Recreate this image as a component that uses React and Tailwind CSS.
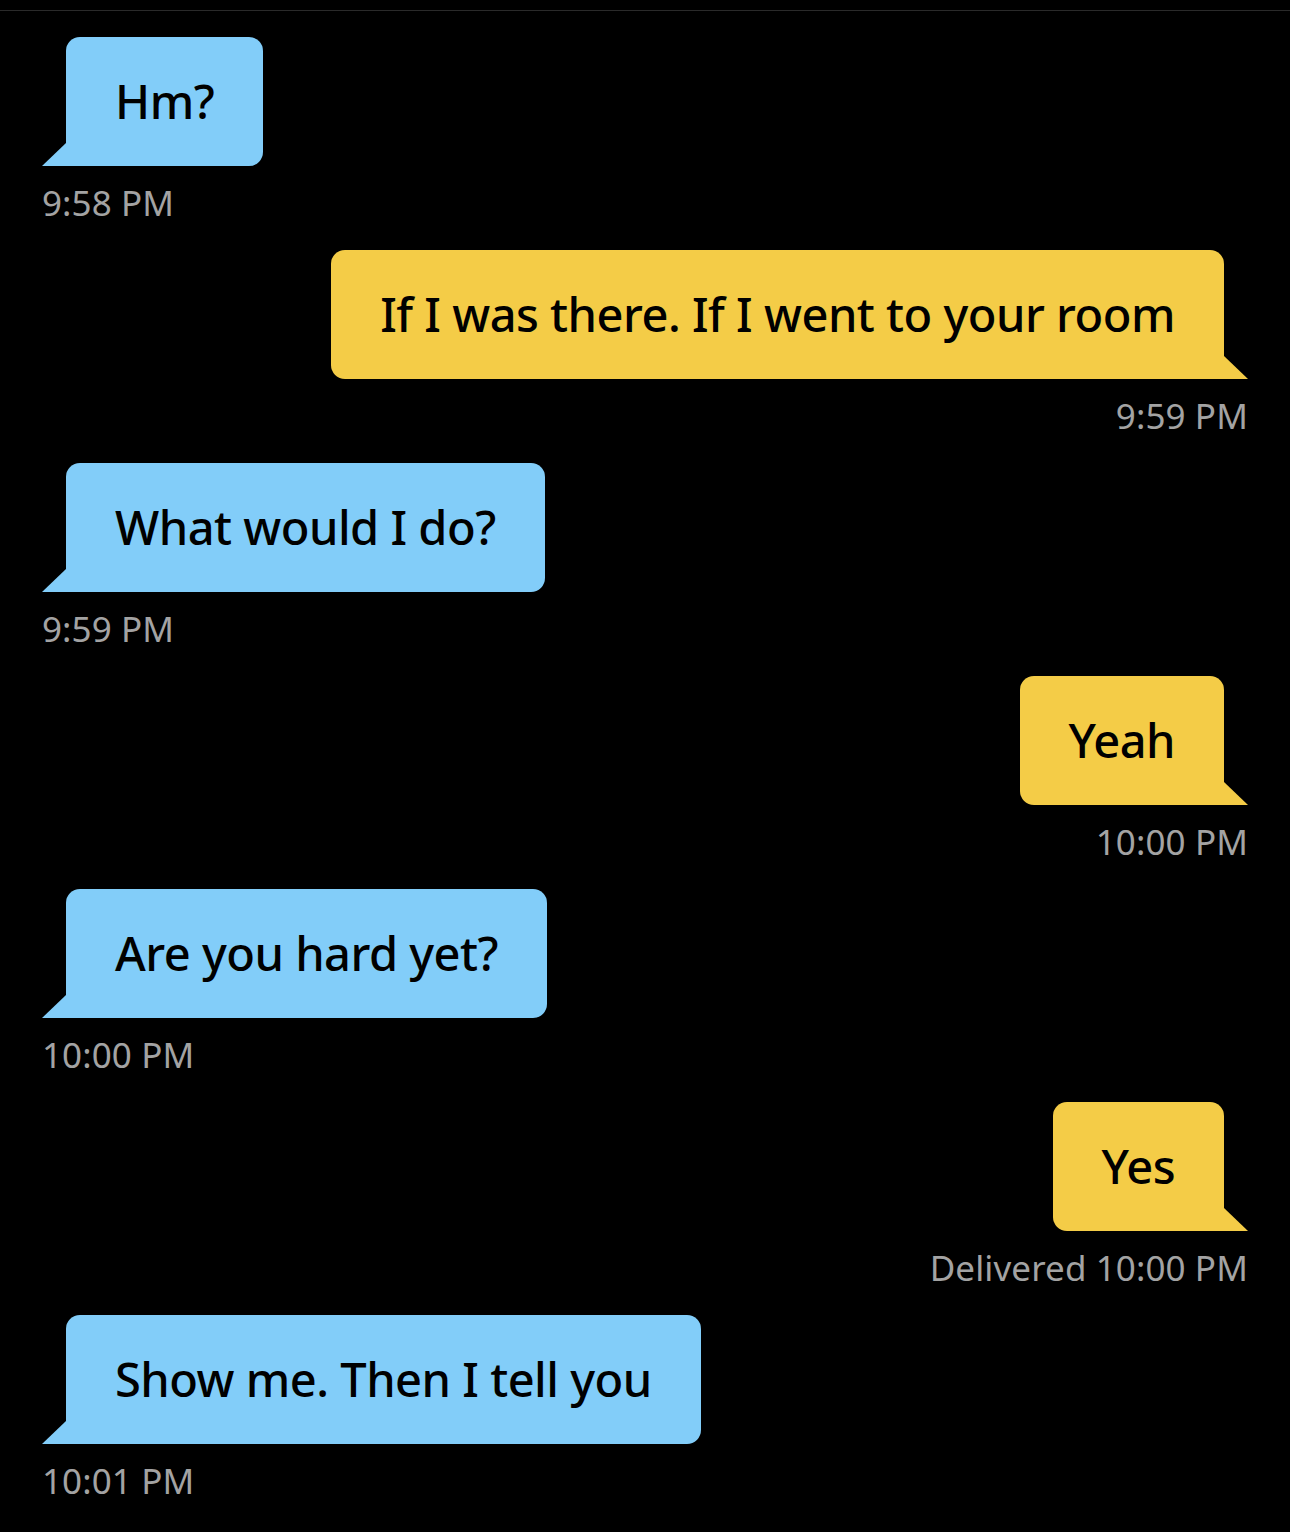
const messages = [
  { from: "them", text: "Hm?", time: "9:58 PM" },
  { from: "me", text: "If I was there. If I went to your room", time: "9:59 PM" },
  { from: "them", text: "What would I do?", time: "9:59 PM" },
  { from: "me", text: "Yeah", time: "10:00 PM" },
  { from: "them", text: "Are you hard yet?", time: "10:00 PM" },
  { from: "me", text: "Yes", time: "Delivered 10:00 PM" },
  { from: "them", text: "Show me. Then I tell you", time: "10:01 PM" },
];

function Tail({ side, color }) {
  // little triangle in the bottom corner of the bubble
  const points = side === "left" ? "24,0 24,23 0,23" : "0,0 0,23 24,23";
  return (
    <svg width="24" height="23" viewBox="0 0 24 23" className="block shrink-0">
      <polygon points={points} fill={color} />
    </svg>
  );
}

function Message({ msg }) {
  const mine = msg.from === "me";
  const color = mine ? "#f4cc47" : "#82cdf9";

  return (
    <div className={`flex flex-col ${mine ? "items-end" : "items-start"}`}>
      <div className="flex items-end">
        {!mine && <Tail side="left" color={color} />}
        <div
          className={`h-[129px] flex items-center px-[49px] rounded-[14px] text-[47px] font-medium text-black leading-none whitespace-nowrap tracking-[-0.5px] ${
            mine ? "bg-[#f4cc47] rounded-br-none" : "bg-[#82cdf9] rounded-bl-none"
          }`}
        >
          {msg.text}
        </div>
        {mine && <Tail side="right" color={color} />}
      </div>
      <div className="mt-[17px] text-[35px] leading-[40px] text-[#a3a3a3] tracking-[0.1px]">
        {msg.time}
      </div>
    </div>
  );
}

export default function App() {
  return (
    <div
      className="w-[1290px] h-[1532px] bg-black overflow-hidden"
      style={{ fontFamily: '"Noto Sans", "Open Sans", sans-serif' }}
    >
      <div className="h-[10px]" />
      <div className="border-t border-[#2a2a2a]" />
      <div className="px-[42px] pt-[26px] flex flex-col gap-[27px]">
        {messages.map((m, i) => (
          <Message key={i} msg={m} />
        ))}
      </div>
    </div>
  );
}
